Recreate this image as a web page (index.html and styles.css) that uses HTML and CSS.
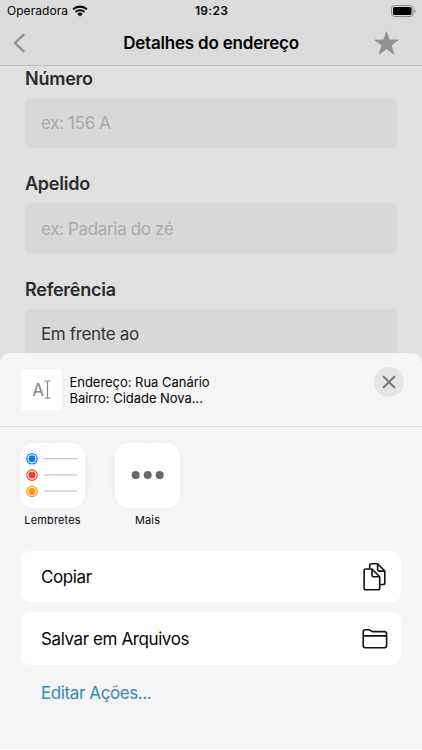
FILE: index.html
```html
<!DOCTYPE html>
<html lang="pt-BR">
<head>
    <meta charset="UTF-8">
    <meta name="viewport" content="width=device-width, initial-scale=1.0">
    <title>Detalhes do endereço</title>
    <link rel="stylesheet" href="styles.css">
</head>
<body>
    <div class="screen">
        <!-- Status Bar -->
        <div class="status-bar">
            <div class="carrier">
                <span>Operadora</span>
                <svg width="16" height="12" viewBox="0 0 16 12">
                    <path d="M1.2 4.3a9.8 9.8 0 0 1 13.6 0" fill="none" stroke="#000" stroke-width="2.2"/>
                    <path d="M3.6 7a6.3 6.3 0 0 1 8.8 0" fill="none" stroke="#000" stroke-width="2.1"/>
                    <path d="M8 11.5 5.4 8.9a3.7 3.7 0 0 1 5.2 0z"/>
                </svg>
            </div>
            <span class="clock">19:23</span>
            <svg class="battery" width="25" height="12" viewBox="0 0 25 12">
                <rect x=".5" y=".5" width="21.5" height="11" rx="3" fill="none" stroke="#858585"/>
                <rect x="2" y="2" width="18.5" height="8" rx="1.6"/>
                <path d="M23.3 4.2q1.3.5 1.3 1.8t-1.3 1.8z" fill="#858585"/>
            </svg>
        </div>

        <!-- Header -->
        <header class="nav-bar">
            <svg class="back" width="12" height="20" viewBox="0 0 12 20">
                <path d="M11.3 1.2 2 10l9.3 8.8" fill="none" stroke="#929292" stroke-width="2.4"/>
            </svg>
            <h1>Detalhes do endereço</h1>
            <svg class="star" width="25" height="24" viewBox="0 0 25 24">
                <path d="M12.5.8 15.4 9h8.8l-7 5.3 2.6 8.7-7.3-5.2L5.2 23l2.6-8.7L.8 9h8.8z" fill="#929292" stroke="#929292" stroke-width=".8" stroke-linejoin="round"/>
            </svg>
        </header>

        <!-- Address Form -->
        <main class="form">
            <div class="field">
                <label for="numero">Número</label>
                <input type="text" id="numero" placeholder="ex: 156 A">
            </div>
            <div class="field">
                <label for="apelido">Apelido</label>
                <input type="text" id="apelido" placeholder="ex: Padaria do zé">
            </div>
            <div class="field">
                <label for="referencia">Referência</label>
                <input type="text" id="referencia" value="Em frente ao">
            </div>
        </main>

        <!-- Share Sheet -->
        <section class="sheet">
            <div class="sheet-header">
                <div class="thumb">
                    <span>A</span>
                    <svg width="7" height="19" viewBox="0 0 7 19">
                        <path d="M.5 1h1.6q1.4 0 1.4 1 0-1 1.4-1h1.6M3.5 2v15M.5 18h1.6q1.4 0 1.4-1 0 1 1.4 1h1.6" fill="none" stroke="#858585" stroke-width="1.2"/>
                    </svg>
                </div>
                <p class="summary">
                    <span>Endereço: Rua Canário</span>
                    <span>Bairro: Cidade Nova...</span>
                </p>
                <button class="close" aria-label="Fechar">
                    <svg width="14" height="14" viewBox="0 0 14 14">
                        <path d="m1.7 1.7 10.6 10.6M12.3 1.7 1.7 12.3" stroke="#7b7b80" stroke-width="2.2" stroke-linecap="round"/>
                    </svg>
                </button>
            </div>

            <div class="apps">
                <div class="app">
                    <div class="app-icon">
                        <svg width="65" height="65" viewBox="0 0 65 65">
                            <g fill="none" stroke-width="1.2">
                                <circle cx="12" cy="15.8" r="5.2" stroke="#1a7ff5"/>
                                <circle cx="12" cy="32.1" r="5.2" stroke="#f2453d"/>
                                <circle cx="12" cy="48.4" r="5.2" stroke="#f79a13"/>
                            </g>
                            <circle cx="12" cy="15.8" r="3.5" fill="#0a7aff"/>
                            <circle cx="12" cy="32.1" r="3.5" fill="#ff3b30"/>
                            <circle cx="12" cy="48.4" r="3.5" fill="#ff9500"/>
                            <path d="M23.7 15.6h33.6M23.7 31.9h33.6M23.7 48.2h33.6" stroke="#c6c6c8" stroke-width="1.2"/>
                        </svg>
                    </div>
                    <span>Lembretes</span>
                </div>
                <div class="app">
                    <div class="app-icon">
                        <svg width="65" height="65" viewBox="0 0 65 65">
                            <g fill="#68676e">
                                <circle cx="20.7" cy="32" r="4"/>
                                <circle cx="32.7" cy="32" r="4"/>
                                <circle cx="44.7" cy="32" r="4"/>
                            </g>
                        </svg>
                    </div>
                    <span>Mais</span>
                </div>
            </div>

            <div class="actions">
                <div class="action">
                    <span>Copiar</span>
                    <svg width="26" height="30" viewBox="0 0 26 30" fill="none" stroke="#111" stroke-width="1.6" stroke-linejoin="round">
                        <path d="M7.7 6.5V3.6q0-1.8 1.8-1.8h6.1l7.2 7.3v11.6q0 1.8-1.8 1.8h-3.1"/>
                        <path d="M15.6 1.8v5.7q0 1.6 1.6 1.6h5.6"/>
                        <path d="M4 7h6l7.7 7.8v11.1q0 1.9-1.9 1.9H4q-1.9 0-1.9-1.9v-17Q2.1 7 4 7z" fill="#fff"/>
                        <path d="M10 7v6.1q0 1.7 1.7 1.7h6"/>
                    </svg>
                </div>
                <div class="action action-save">
                    <span>Salvar em Arquivos</span>
                    <svg width="26" height="22" viewBox="0 0 26 22" fill="none" stroke="#111" stroke-width="1.6" stroke-linejoin="round">
                        <path d="M1.2 17.5V3.8q0-2.1 2.1-2.1h3.5q1 0 1.8.8l.7.6q.6.5 1.5.5h11.6q2.2 0 2.2 2.2v11.7q0 2.2-2.2 2.2H3.4q-2.2 0-2.2-2.2zM1.2 7.9h23.4"/>
                    </svg>
                </div>
                <a class="edit" href="#">Editar Ações...</a>
            </div>
        </section>
    </div>
</body>
</html>
```

FILE: styles.css
```css
/* Global Styles */
* {
    box-sizing: border-box;
}

body {
    font-family: Inter, "Liberation Sans", sans-serif;
    margin: 0;
    background-color: white;
    color: #050505;
}

svg {
    display: block;
    flex-shrink: 0;
}

.screen {
    position: relative;
    width: 422px;
    height: 749px;
    overflow: hidden;
    background-color: #e0e0e0;
}

/* Status Bar */
.status-bar {
    display: grid;
    grid-template-columns: 1fr auto 1fr;
    align-items: center;
    height: 21px;
    padding: 0 6px 0 7px;
    background-color: #dbdbdb;
    font-size: 12px;
}

.carrier {
    display: flex;
    align-items: center;
    gap: 4px;
    letter-spacing: 0.05px;
}

.clock {
    font-weight: 600;
    letter-spacing: 0.3px;
}

.battery {
    justify-self: end;
}

/* Header */
.nav-bar {
    display: grid;
    grid-template-columns: 1fr auto 1fr;
    align-items: center;
    height: 45px;
    padding: 0 23px 0 13px;
    background-color: #dbdbdb;
    border-bottom: 1px solid #bdbdbd;
}

.nav-bar h1 {
    margin: 0;
    padding-left: 10px;
    font-size: 17px;
    font-weight: 600;
    letter-spacing: -0.2px;
}

.star {
    justify-self: end;
}

/* Address Form */
.form {
    display: flex;
    flex-direction: column;
    gap: 25px;
    padding: 1.5px 25px 0;
}

.field label {
    display: block;
    height: 30px;
    line-height: 21px;
    font-size: 18px;
    font-weight: 600;
    letter-spacing: -0.25px;
    color: #2c2c2c;
}

.field input {
    display: block;
    width: 100%;
    height: 50.5px;
    padding: 1px 16px 0;
    border: none;
    border-radius: 6px;
    background-color: #d8d8d8;
    color: #363636;
    font-family: inherit;
    font-size: 17px;
    letter-spacing: -0.35px;
}

.field input::placeholder {
    color: #aaa;
}

/* Share Sheet */
.sheet {
    position: absolute;
    left: 0;
    right: 0;
    bottom: 0;
    height: 396px;
    border-radius: 10px 10px 0 0;
    background-color: #f5f5f5;
}

.sheet-header {
    display: flex;
    height: 74px;
    padding: 16px 18px 0 21px;
    border-bottom: 1px solid #dedede;
}

.thumb {
    display: flex;
    align-items: center;
    justify-content: center;
    width: 41px;
    height: 41px;
    border-radius: 3px;
    background-color: white;
    color: #858585;
    font-size: 17px;
    font-weight: 400;
}

.summary {
    flex: 1;
    margin: 5px 0 0 7.5px;
    font-size: 13px;
    line-height: 16px;
    letter-spacing: -0.03px;
}

.summary span {
    display: block;
}

.close {
    display: flex;
    align-items: center;
    justify-content: center;
    width: 30px;
    height: 30px;
    margin-top: -2px;
    padding: 0;
    border: none;
    border-radius: 50%;
    background-color: #e5e5e8;
}

/* App Icons */
.apps {
    display: flex;
    gap: 30px;
    padding: 15.5px 20px 0;
}

.app {
    display: flex;
    flex-direction: column;
    align-items: center;
    gap: 5px;
    width: 65px;
    font-size: 11px;
    line-height: 14px;
    letter-spacing: 0.15px;
}

.app-icon {
    border-radius: 14px;
    background-color: white;
    box-shadow: 0 0 12px rgba(0, 0, 0, 0.04);
}

/* Actions */
.actions {
    display: flex;
    flex-direction: column;
    gap: 10px;
    padding: 24.5px 21px 0;
    font-size: 17px;
    letter-spacing: -0.4px;
}

.action {
    display: flex;
    align-items: center;
    justify-content: space-between;
    height: 51px;
    padding: 0 13px 0 20px;
    border-radius: 9px;
    background-color: white;
}

.action-save {
    height: 53px;
}

.edit {
    padding: 8px 20px 0;
    color: #3389b0;
    text-decoration: none;
}
```
